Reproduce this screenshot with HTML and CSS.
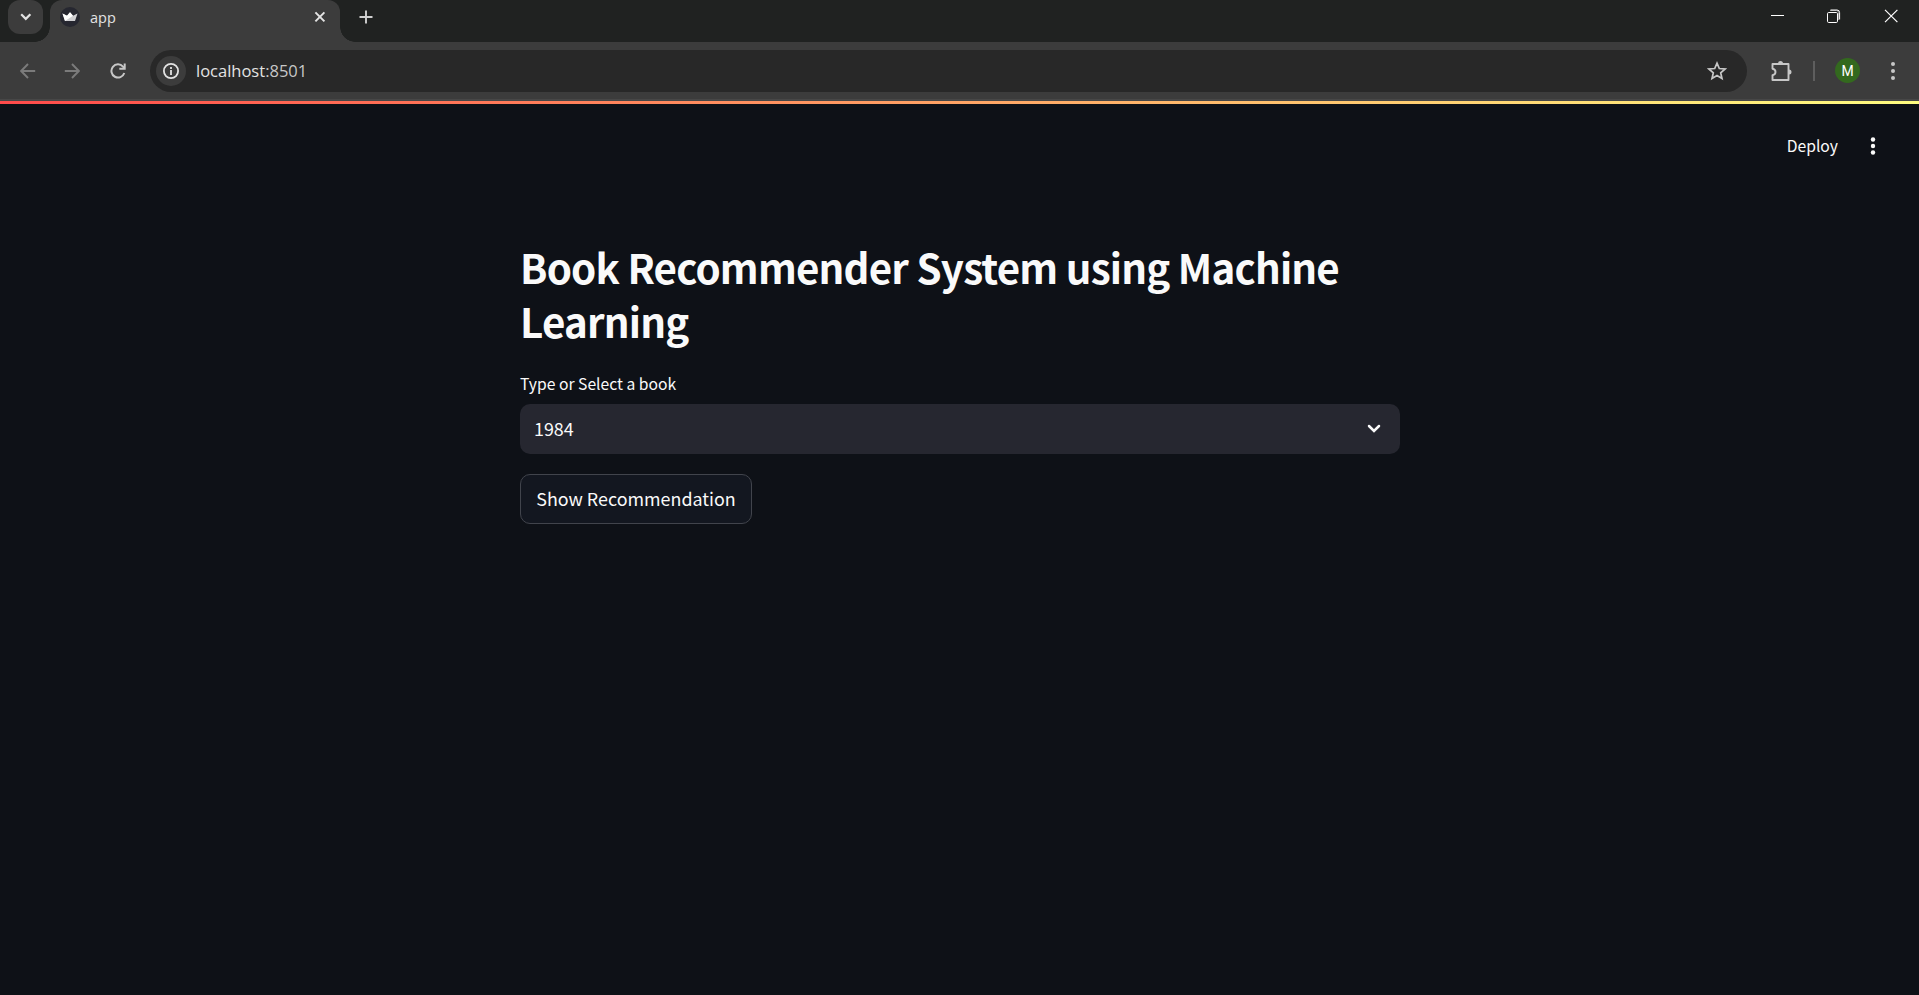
FILE: index.html
```html
<!DOCTYPE html>
<html lang="en">
<head>
<meta charset="utf-8">
<title>app</title>
<link rel="stylesheet" href="styles.css">
</head>
<body>
<header class="tabstrip">
  <button class="tab-search" aria-label="Search tabs"><svg width="35" height="34" viewBox="0 0 35 34"><path d="M13.200 14.300l4.600 4.600 4.600-4.600" fill="none" stroke="#e3e3e3" stroke-width="2.200"/></svg></button>
  <div class="tab">
    <svg class="favicon" width="20" height="20" viewBox="0 0 20 20"><circle cx="10" cy="10" r="10" fill="#262730"/><path d="M2.500 6.500l4.500 2.300L10 5.300l3 3.500 4.500-2.300L15 14H5z" fill="#cfcfd2"/><path d="M10 5.300l3 3.500L5 14 2.500 6.500 7 8.800z" fill="#fff"/></svg>
    <span class="tab-title">app</span>
    <svg class="tab-close" width="12" height="12" viewBox="0 0 12 12"><path d="M1.400 1.400l9 9M10.400 1.400l-9 9" stroke="#e3e3e3" stroke-width="2"/></svg>
  </div>
  <svg class="new-tab" width="14" height="14" viewBox="0 0 14 14"><path d="M7 .5v13M.5 7h13" stroke="#d0d0d0" stroke-width="1.900"/></svg>
  <div class="window-controls">
    <svg width="14" height="14" viewBox="0 0 14 14"><path d="M1 6.500h13" stroke="#fff"/></svg>
    <svg width="14" height="14" viewBox="0 0 14 14" fill="none" stroke="#fff"><rect x=".5" y="3.500" width="10" height="10" rx="1.200"/><path d="M3 1.500h6.500q2 0 2 2V11" stroke="#8a8a8a"/><path d="M3.500 1h6.500q2.600 0 2.600 2.600v6.900"/></svg>
    <svg width="14" height="14" viewBox="0 0 14 14"><path d="M1 .8l12.400 12.400M13.400.8L1 13.200" stroke="#fff" stroke-width="1.200"/></svg>
  </div>
</header>
<nav class="toolbar">
  <svg class="back" width="16" height="16" viewBox="0 0 16 16" fill="none" stroke="#7b7b7b" stroke-width="1.900"><path d="M15.200 8H1.700M8 1L1.200 8 8 15"/></svg>
  <svg class="forward" width="16" height="16" viewBox="0 0 16 16" fill="none" stroke="#7b7b7b" stroke-width="1.900"><path d="M.8 8h13.500M8 1l6.800 7L8 15"/></svg>
  <svg class="reload" width="16" height="16" viewBox="0 0 16 16" fill="none" stroke="#c7c7c7" stroke-width="2"><path d="M14.300 10A6.600 6.600 0 1 1 13 3.600L14.500 5.300"/><path d="M14.700.5v5.300H9.300"/></svg>
  <div class="omnibox">
    <span class="site-info"><svg width="16" height="16" viewBox="0 0 16 16"><circle cx="8" cy="8" r="7.100" fill="none" stroke="#e3e3e3" stroke-width="1.800"/><path d="M8 7v5M8 4v2" stroke="#e3e3e3" stroke-width="1.800"/></svg></span>
    <span class="url">localhost<span class="port">:8501</span></span>
    <svg class="star" width="20" height="20" viewBox="0 0 20 20"><path d="M10 2.200l2.300 5.300 5.800.5-4.400 3.800 1.300 5.700-5-3-5 3 1.300-5.700L1.900 8l5.800-.5z" fill="none" stroke="#c7c7c7" stroke-width="1.700"/></svg>
  </div>
  <svg class="extensions" width="22" height="22" viewBox="0 0 22 22"><path d="M2.500 4h16v16h-16v-4.800q3-.6 3-3.200t-3-3.200z" fill="none" stroke="#c7c7c7" stroke-width="1.900" stroke-linejoin="round"/><path d="M8 3.500a2.500 2.500 0 0 1 5 0zM19 9.500a2.500 2.500 0 0 1 0 5z" fill="#c7c7c7"/></svg>
  <span class="divider"></span>
  <span class="avatar">M</span>
  <svg class="menu" width="6" height="20" viewBox="0 0 6 20" fill="#c7c7c7"><circle cx="3" cy="3" r="2"/><circle cx="3" cy="10" r="2"/><circle cx="3" cy="17" r="2"/></svg>
</nav>
<div class="decoration"></div>
<div class="app-header">
  <span class="deploy">Deploy</span>
  <svg width="6" height="18" viewBox="0 0 6 18" fill="#fafafa"><circle cx="3" cy="2.500" r="2.200"/><circle cx="3" cy="9" r="2.200"/><circle cx="3" cy="15.500" r="2.200"/></svg>
</div>
<main class="content">
  <h1 class="title">Book Recommender System using Machine Learning</h1>
  <label class="label">Type or Select a book</label>
  <div class="select"><span class="value">1984</span><svg width="16" height="12" viewBox="0 0 16 12"><path d="M3 3l5 5 5-5" fill="none" stroke="#fafafa" stroke-width="2.500" stroke-linecap="round"/></svg></div>
  <button class="action">Show Recommendation</button>
</main>
</body>
</html>
```

FILE: styles.css
```css
* { box-sizing: border-box; }
body { margin: 0; height: 995px; overflow: hidden; background: #0e1117; color: #fafafa; font-family: "Noto Sans CJK SC", sans-serif; }
svg { display: block; flex: none; }
button { padding: 0; border: 0; font: inherit; color: inherit; }
.tabstrip { height: 42px; background: #202221; display: flex; align-items: flex-start; }
.tab-search { width: 35px; height: 34px; margin-left: 8px; border-radius: 12px; background: #3c3c3c; }
.tab { position: relative; width: 290px; height: 42px; margin-left: 7px; padding: 0 14px 0 10px; border-radius: 12px 12px 0 0; background: #3c3c3c; display: flex; align-items: flex-start; }
.tab::before, .tab::after { content: ""; position: absolute; bottom: 0; width: 15px; height: 15px; }
.tab::before { left: -15px; background: radial-gradient(circle at 0 0, transparent 14.500px, #3c3c3c 15px); }
.tab::after { right: -15px; background: radial-gradient(circle at 100% 0, transparent 14.500px, #3c3c3c 15px); }
.favicon { margin-top: 7px; }
.tab-title { margin: 6px auto 0 10px; font: 14.500px/24px "Open Sans", sans-serif; color: #e3e3e3; }
.tab-close { margin-top: 11px; }
.new-tab { margin: 10px 0 0 19px; }
.window-controls { margin: 9px 21px 0 auto; display: flex; gap: 43px; }
.toolbar { height: 59px; background: #3c3c3c; border-bottom: 2px solid #474747; display: flex; align-items: center; padding: 0 23px 0 20px; }
.forward { margin-left: 28px; }
.reload { margin-left: 30px; }
.omnibox { width: 1597px; height: 42px; margin-left: 24px; border-radius: 21px; background: #282828; display: flex; align-items: center; padding: 0 20px 0 6px; }
.site-info { width: 30px; height: 30px; border-radius: 50%; background: #3c3c3c; display: grid; place-items: center; }
.url { margin: 0 auto 0 10px; font: 16.500px/24px "Open Sans", sans-serif; color: #e3e3e3; }
.port { color: #c7c7c7; }
.extensions { margin-left: 23px; }
.divider { width: 2px; height: 20px; margin-left: 21px; background: #5e5e5e; }
.avatar { width: 25px; height: 25px; margin-left: 20px; border-radius: 50%; background: #33691e; color: #fff; font: 14px/26px Roboto, sans-serif; text-align: center; }
.menu { margin-left: auto; }
.decoration { height: 3px; background: linear-gradient(90deg, #ff4b4b, #fffd80); }
.app-header { height: 84px; padding-right: 43px; display: flex; justify-content: flex-end; align-items: center; }
.deploy { margin: -2px 32px 0 0; font-size: 15.700px; }
.content { width: 880px; margin: 52px 0 0 520px; }
.title { margin: 0; font-size: 40.300px; line-height: 54px; font-weight: 700; letter-spacing: -.8px; }
.label { display: block; margin-top: 23px; font-size: 15.700px; line-height: 26px; }
.select { height: 50px; margin-top: 7px; padding: 0 18px 0 14px; border-radius: 10px; background: #262730; display: flex; align-items: center; justify-content: space-between; }
.value { margin-top: -3px; font-size: 17.900px; }
.action { width: 232px; height: 50px; margin-top: 20px; padding-bottom: 2px; border: 1px solid #41444c; border-radius: 10px; background: #131720; font-size: 17.900px; }
```
